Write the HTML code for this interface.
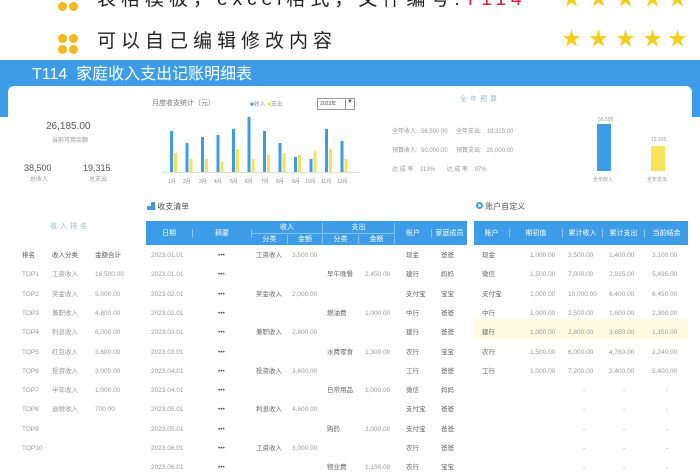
<!DOCTYPE html>
<html><head><meta charset="utf-8">
<style>
*{margin:0;padding:0;box-sizing:border-box}
body{width:700px;height:470px;overflow:hidden;background:#fff;position:relative;font-family:"Liberation Sans","Noto Sans CJK SC",sans-serif;color:#888}
.a{position:absolute;white-space:nowrap}
.big{font-size:19px;color:#222;letter-spacing:5px;line-height:22px}
.st{position:absolute;color:#f7cc1a;font-size:19px;line-height:20px}
.ico{position:absolute;width:20px;height:20px}
.ico i{position:absolute;width:9px;height:9px;background:#f4b81c;border-radius:50%}
.s{font-size:6px;color:#999;line-height:8px}
.th{position:absolute;background:#3d9ce8;color:#fff;font-size:7px;line-height:9px}
.th div{position:absolute;text-align:center;border-right:1px solid #8cc4f0}
.r{position:absolute;font-size:6.5px;color:#999;line-height:9px;height:9px}
</style></head><body>
<div class="ico" style="left:58px;top:-9px"><i style="left:0;top:0"></i><i style="left:11px;top:0"></i><i style="left:0;top:11px"></i><i style="left:11px;top:11px"></i></div>
<div class="a big" style="left:97px;top:-11px">表格模板，excel格式，文件编号:<span style="color:#e0203a">T114</span></div>
<div class="ico" style="left:58px;top:34px"><i style="left:0;top:0"></i><i style="left:11px;top:0"></i><i style="left:0;top:11px"></i><i style="left:11px;top:11px"></i></div>
<div class="a big" style="left:97px;top:31px">可以自己编辑修改内容</div>
<div class="st" style="left:562px;top:-10px">★</div><div class="st" style="left:589px;top:-10px">★</div><div class="st" style="left:616px;top:-10px">★</div><div class="st" style="left:643px;top:-10px">★</div><div class="st" style="left:668px;top:-10px">★</div>
<div class="st" style="left:562px;top:30px">★</div><div class="st" style="left:589px;top:30px">★</div><div class="st" style="left:616px;top:30px">★</div><div class="st" style="left:643px;top:30px">★</div><div class="st" style="left:668px;top:30px">★</div>

<div class="a" style="left:0;top:60px;width:700px;height:57px;background:#3d9ce8"></div>
<div class="a" style="left:32px;top:65px;font-size:16px;color:#fff;line-height:20px">T114&nbsp; 家庭收入支出记账明细表</div>
<div class="a" style="left:8px;top:86px;width:684px;height:384px;background:#fff;border-radius:6px 6px 0 0"></div>

<div class="a" style="left:46px;top:121px;font-size:10px;color:#555;line-height:12px">26,185.00</div>
<div class="a s" style="left:52px;top:137px">当前可用余额</div>
<div class="a" style="left:24px;top:163px;font-size:9px;color:#555;line-height:11px">38,500</div>
<div class="a" style="left:83px;top:163px;font-size:9px;color:#555;line-height:11px">19,315</div>
<div class="a s" style="left:30px;top:176px">总收入</div>
<div class="a s" style="left:89px;top:176px">总支出</div>

<div class="a s" style="left:152px;top:100px;font-size:7px;color:#777">月度收支统计（元）</div>
<div class="a s" style="left:250px;top:101px"><span style="color:#3d9ce8">■</span>收入 <span style="color:#f5e15a">■</span>支出</div>
<div class="a" style="left:317px;top:98px;width:38px;height:12px;border:1px solid #999;font-size:5px;color:#555;padding:2px;line-height:7px">2023年<span style="position:absolute;right:0;top:0;width:9px;height:10px;border-left:1px solid #999;text-align:center;font-size:6px">▼</span></div>
<svg class="a" style="left:150px;top:115px" width="215" height="75">
<g fill="#3d9ce8">
<rect x="20" y="16" width="3" height="41"/><rect x="35.5" y="28" width="3" height="29"/><rect x="51" y="22" width="3" height="35"/><rect x="66.5" y="20" width="3" height="37"/><rect x="82" y="14" width="3" height="43"/><rect x="97.5" y="2" width="3" height="55"/><rect x="113" y="16" width="3" height="41"/><rect x="128.5" y="28" width="3" height="29"/><rect x="144" y="42" width="3" height="15"/><rect x="159.5" y="44" width="3" height="13"/><rect x="175" y="14" width="3" height="43"/><rect x="190.5" y="26" width="3" height="31"/></g>
<g fill="#f5e15a">
<rect x="24" y="38" width="3" height="19"/><rect x="39.5" y="44" width="3" height="13"/><rect x="55" y="44" width="3" height="13"/><rect x="70.5" y="47" width="3" height="10"/><rect x="86" y="34" width="3" height="23"/><rect x="101.5" y="44" width="3" height="13"/><rect x="117" y="40" width="3" height="17"/><rect x="132.5" y="38" width="3" height="19"/><rect x="148" y="40" width="3" height="17"/><rect x="163.5" y="36" width="3" height="21"/><rect x="179" y="34" width="3" height="23"/><rect x="194.5" y="44" width="3" height="13"/></g>
<line x1="12" y1="57.5" x2="210" y2="57.5" stroke="#ddd"/>
<g font-size="5" fill="#888"><text x="18" y="68">1月</text><text x="33" y="68">2月</text><text x="49" y="68">3月</text><text x="64" y="68">4月</text><text x="80" y="68">5月</text><text x="95" y="68">6月</text><text x="111" y="68">7月</text><text x="126" y="68">8月</text><text x="142" y="68">9月</text><text x="155" y="68">10月</text><text x="171" y="68">11月</text><text x="187" y="68">12月</text></g>
</svg>

<div class="a s" style="left:460px;top:96px;color:#9bc;font-size:7px;letter-spacing:3px">全年预算</div>
<div class="a s" style="left:392px;top:128px">全年收入:&nbsp; 56,500.00 &nbsp;&nbsp;&nbsp; 全年支出:&nbsp;&nbsp; 19,315.00</div>
<div class="a s" style="left:392px;top:147px">预算收入:&nbsp; 50,000.00 &nbsp;&nbsp;&nbsp; 预算支出:&nbsp;&nbsp; 20,000.00</div>
<div class="a s" style="left:392px;top:166px">达 成 率:&nbsp;&nbsp; 113% &nbsp;&nbsp;&nbsp;&nbsp;&nbsp; 达 成 率:&nbsp;&nbsp; 97%</div>
<div class="a" style="left:597px;top:124px;width:14px;height:47px;background:#3d9ce8"></div>
<div class="a" style="left:651px;top:146px;width:14px;height:25px;background:#f8e45c"></div>
<div class="a s" style="left:598px;top:116px;font-size:5px">56,500</div>
<div class="a s" style="left:651px;top:136px;font-size:5px">19,315</div>
<div class="a s" style="left:593px;top:176px;font-size:5px">全年收入</div>
<div class="a s" style="left:647px;top:176px;font-size:5px">全年支出</div>

<div class="a" style="left:147px;top:202px;font-size:8px;color:#555;line-height:10px"><span style="color:#3d9ce8">▟</span> 收支清单</div>
<div class="a" style="left:476px;top:202px;font-size:8px;color:#555;line-height:10px"><span style="display:inline-block;width:7px;height:7px;border:2px solid #3d9ce8;border-radius:50%"></span> 账户自定义</div>

<div class="a s" style="left:50px;top:223px;color:#9bc;font-size:7px;letter-spacing:3px">收入排名</div>

<div class="th" style="left:146px;top:221px;width:321px;height:24px">
<div style="left:0;width:47px;top:8px">日期</div><div style="left:47px;width:59px;top:8px">摘要</div>
<div style="left:106px;width:71px;top:2px;border-bottom:1px solid #8cc4f0;height:11px">收入</div>
<div style="left:106px;width:36px;top:14px">分类</div><div style="left:142px;width:35px;top:14px">金额</div>
<div style="left:177px;width:72px;top:2px;border-bottom:1px solid #8cc4f0;height:11px">支出</div>
<div style="left:177px;width:36px;top:14px">分类</div><div style="left:213px;width:36px;top:14px">金额</div>
<div style="left:249px;width:37px;top:8px">账户</div><div style="left:286px;width:35px;top:8px;border:0">家庭成员</div>
</div>
<div class="th" style="left:474px;top:221px;width:214px;height:24px">
<div style="left:0;width:36px;top:8px">账户</div><div style="left:36px;width:53px;top:8px">期初值</div><div style="left:89px;width:40px;top:8px">累计收入</div><div style="left:129px;width:42px;top:8px">累计支出</div><div style="left:171px;width:43px;top:8px;border:0">当前结余</div>
</div>
<div class="a" style="left:474px;top:319px;width:214px;height:20px;background:#fdfbe2"></div>

<div id="rows"></div>
<script>
var L=[["排名","收入分类","金额合计"],["TOP1","工资收入","16,500.00"],["TOP2","奖金收入","5,000.00"],["TOP3","兼职收入","4,800.00"],["TOP4","利息收入","6,000.00"],["TOP5","红包收入","3,600.00"],["TOP6","投资收入","3,000.00"],["TOP7","半年收入","1,000.00"],["TOP8","退税收入","700.00"],["TOP9","",""],["TOP10","",""]];
var M=[["2023.01.01","工资收入","3,500.00","","","现金","爸爸"],["2023.01.01","","","早午晚餐","2,450.00","建行","妈妈"],["2023.02.01","奖金收入","2,000.00","","","支付宝","宝宝"],["2023.02.01","","","燃油费","1,000.00","中行","爸爸"],["2023.03.01","兼职收入","2,800.00","","","建行","爸爸"],["2023.03.01","","","水费零食","1,300.00","农行","宝宝"],["2023.04.01","投资收入","3,600.00","","","工行","爸爸"],["2023.04.01","","","日常用品","1,000.00","微信","妈妈"],["2023.05.01","利息收入","4,600.00","","","支付宝","爸爸"],["2023.05.01","","","购药","3,000.00","支付宝","爸爸"],["2023.06.01","工资收入","3,000.00","","","农行","爸爸"],["2023.06.01","","","物业费","1,150.00","农行","宝宝"]];
var R=[["现金","1,000.00","3,500.00","1,400.00","3,100.00"],["微信","1,500.00","7,000.00","2,925.00","5,495.00"],["支付宝","1,000.00","10,000.00","6,400.00","6,450.00"],["中行","1,000.00","2,500.00","1,600.00","2,300.00"],["建行","1,000.00","2,800.00","3,650.00","1,150.00"],["农行","1,500.00","6,000.00","4,760.00","2,240.00"],["工行","1,000.00","7,200.00","2,400.00","5,400.00"],["","","-","-","-"],["","","-","-","-"],["","","-","-","-"],["","","-","-","-"],["","","-","-","-"]];
var h="",y0=251,dy=19.3;
function t(x,y,s,c){if(!s)return;h+='<div class="r" style="left:'+x+'px;top:'+y.toFixed(1)+'px'+(c?';color:'+c:'')+'">'+s+'</div>';}
L.forEach(function(r,i){var y=y0+i*dy,c=i==0?'#555':'';t(22,y,r[0],c);t(52,y,r[1],c);t(95,y,r[2],c);});
M.forEach(function(r,i){var y=y0+i*dy;t(151,y,r[0]);t(218,y,"•••",'#555');t(256,y,r[1],'#666');t(292,y,r[2]);t(327,y,r[3],'#666');t(365,y,r[4]);t(406,y,r[5],'#666');t(441,y,r[6],'#666');});
R.forEach(function(r,i){var y=y0+i*dy;t(482,y,r[0],'#666');t(530,y,r[1]);t(r[2]=='-'?583:568,y,r[2]);t(r[3]=='-'?623:609,y,r[3]);t(r[4]=='-'?666:652,y,r[4]);});
document.getElementById('rows').innerHTML=h;
</script>
</body></html>
